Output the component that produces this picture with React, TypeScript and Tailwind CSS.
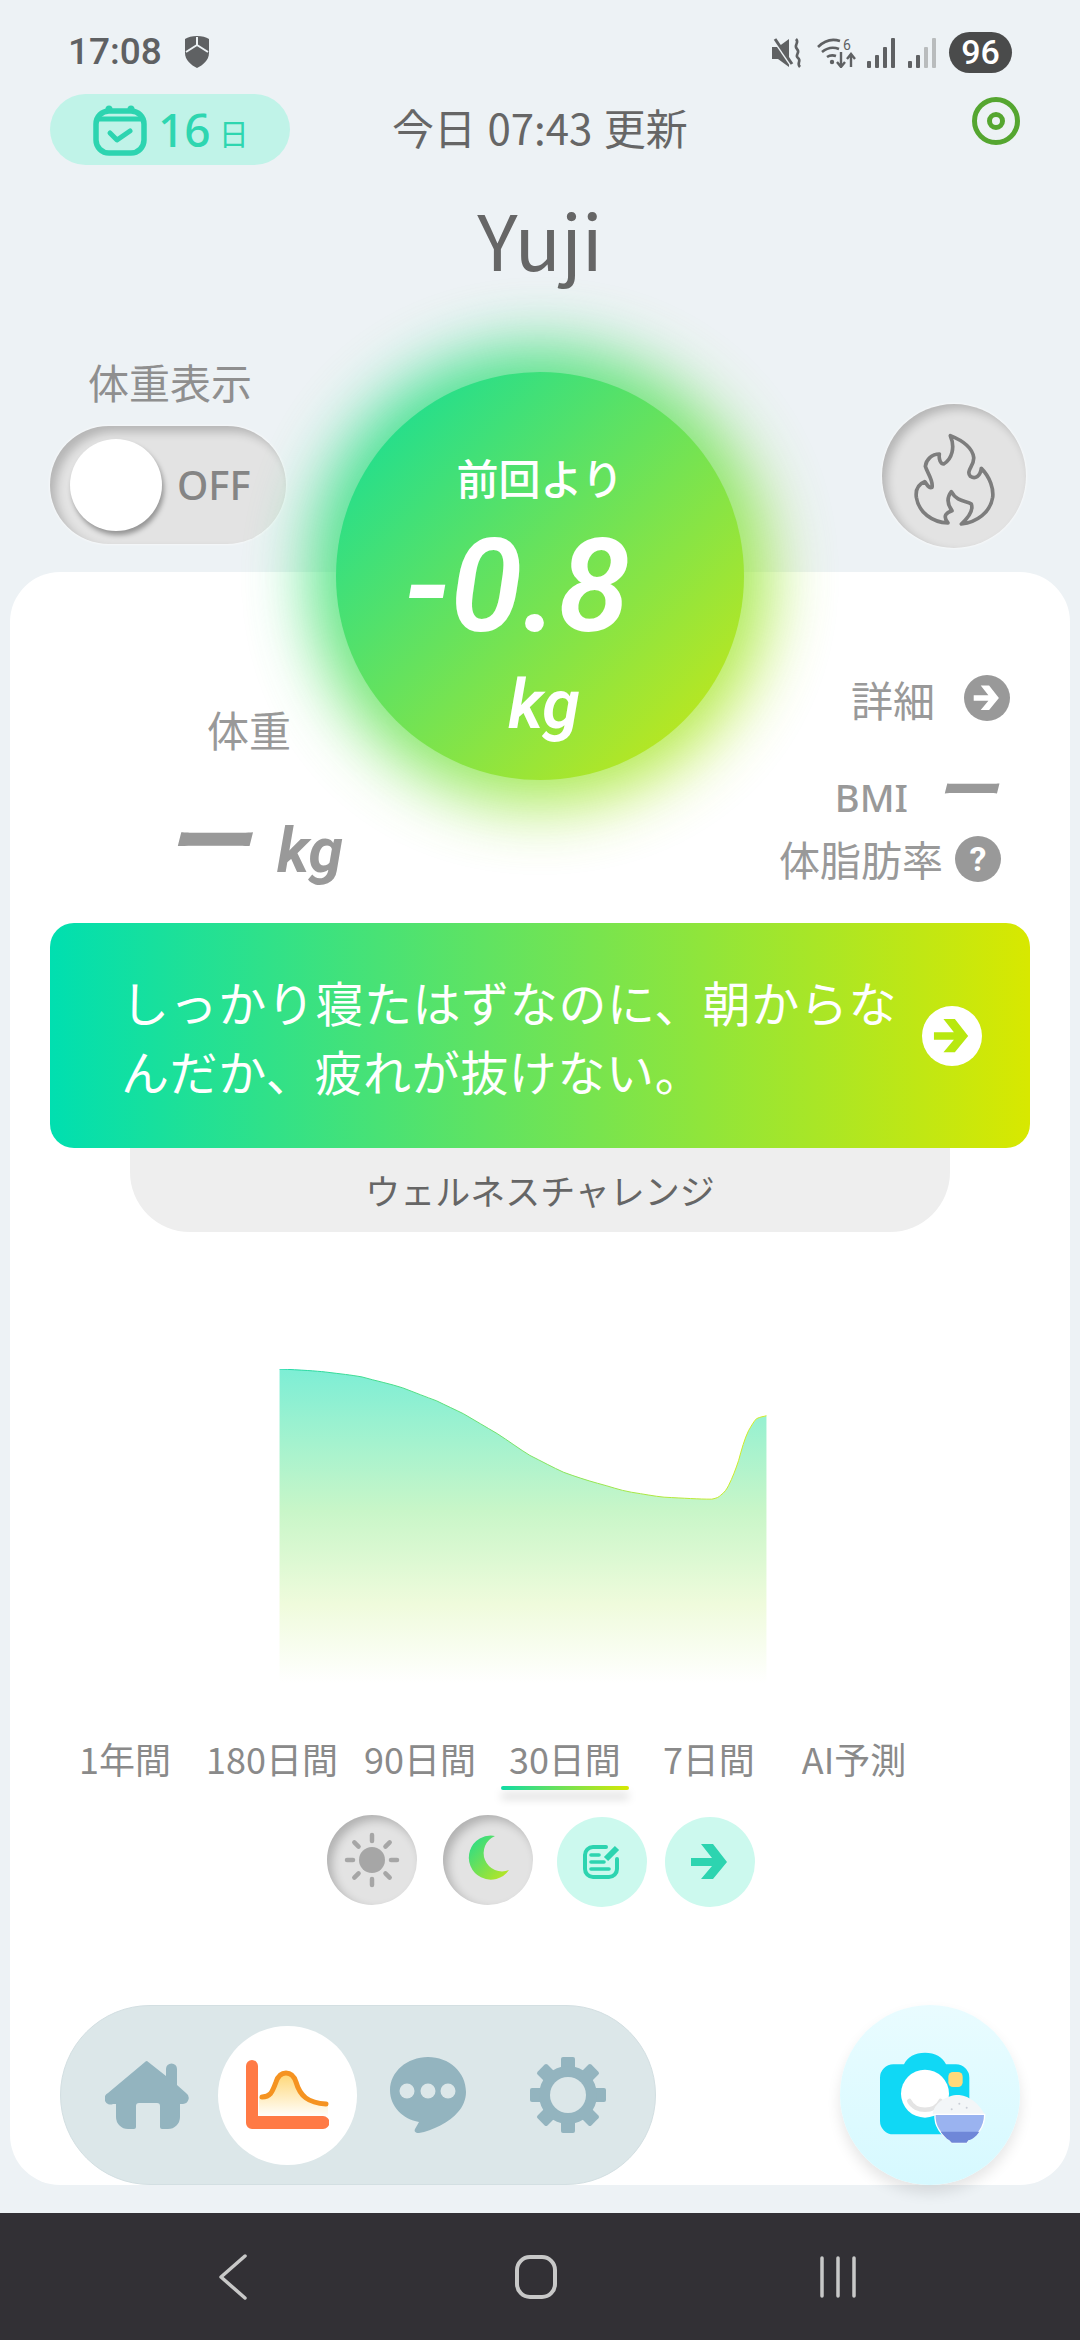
const MINT = '#2dd4b0';

const ranges = [
  { label: '1年間', cls: 'ml-[69px]' },
  { label: '180日間', cls: 'ml-[35px]' },
  { label: '90日間', cls: 'ml-[26px]' },
  { label: '30日間', cls: 'ml-[33px]', active: true },
  { label: '7日間', cls: 'ml-[42px]' },
  { label: 'AI予測', cls: 'ml-[47px]' },
];

function ArrowGlyph({ size, color }: { size: number; color: string }) {
  return (
    <svg width={size} height={size} viewBox="-20 -20 40 40">
      <path d="M-9 -18H3L17 0L3 17H-9L2 4H-19V-4H2Z" fill={color} />
    </svg>
  );
}

function StatusIcons() {
  return (
    <div className="flex items-center">
      <svg width="30" height="30" viewBox="0 0 30 30" className="ml-[772px]">
        <path d="M0 9h6l11-8v28l-11-8H0z" fill="#5f6163" />
        <path d="M2 2l17 25" stroke="#edf2f5" strokeWidth="3" />
        <path d="M3 1l17 25" stroke="#5f6163" strokeWidth="3" />
        <path d="M24 1c4 4-3 6 1 10s-3 6 1 9-2 5 2 9" stroke="#5f6163" strokeWidth="2.6" fill="none" />
      </svg>
      <svg width="40" height="30" viewBox="0 0 40 30" className="ml-[15px]">
        <path d="M1 9c8-8 16-8 22-6M5 14c6-5 12-5 17-3M10 19c3-2 6-2 9-1" stroke="#5f6163" strokeWidth="2.6" fill="none" />
        <circle cx="15" cy="24" r="2.2" fill="#5f6163" />
        <path d="M24 14v14M20 24l4 5 4-5M34 29V17M30 21l4-5 4 5" stroke="#5f6163" strokeWidth="2.4" fill="none" />
        <text x="26" y="12" fontSize="14" fill="#5f6163" fontFamily="Roboto, sans-serif">6</text>
      </svg>
      <svg width="29" height="30" viewBox="0 0 29 30" className="ml-[10px]">
        <rect x="0" y="23" width="4" height="7" rx="1" fill="#5f6163" />
        <rect x="8" y="17" width="4" height="13" rx="1" fill="#5f6163" />
        <rect x="16" y="9" width="4" height="21" rx="1" fill="#5f6163" />
        <rect x="24" y="0" width="4" height="30" rx="1" fill="#5f6163" />
      </svg>
      <svg width="29" height="30" viewBox="0 0 29 30" className="ml-[12px]">
        <rect x="0" y="23" width="4" height="7" rx="1" fill="#5f6163" />
        <rect x="8" y="17" width="4" height="13" rx="1" fill="#5f6163" />
        <rect x="16" y="9" width="4" height="21" rx="1" fill="#b9bcbd" />
        <rect x="24" y="0" width="4" height="30" rx="1" fill="#b9bcbd" />
      </svg>
      <div className="ml-[12px] w-[63px] h-[41px] rounded-full bg-[#4a4b4b] flex items-center justify-center text-white text-[34px] font-medium font-['Roboto',sans-serif]">
        96
      </div>
    </div>
  );
}

function CalendarIcon() {
  return (
    <svg width="54" height="52" viewBox="0 0 54 52" fill="none" stroke={MINT}>
      <rect x="3" y="7" width="48" height="42" rx="13" strokeWidth="5.5" />
      <path d="M4 15h46" strokeWidth="5" />
      <circle cx="16" cy="5" r="2.5" fill={MINT} strokeWidth="2" />
      <circle cx="38" cy="5" r="2.5" fill={MINT} strokeWidth="2" />
      <path d="M17 29l7 7 13-9" strokeWidth="5" strokeLinecap="round" strokeLinejoin="round" />
    </svg>
  );
}

function FlameIcon() {
  return (
    <svg width="144" height="144" viewBox="60 45 432 432" fill="none">
      <path
        d="M298 405C345 400 385 370 392 325C395 300 385 265 358 238C355 262 340 272 325 262C310 245 338 230 335 205C330 170 290 150 265 140C280 175 270 210 245 225C235 225 230 210 232 195C210 195 192 212 190 232C195 250 215 275 210 295C200 300 195 285 188 278C170 285 160 300 163 325C170 370 210 400 258 402C240 380 255 370 270 365C255 345 255 325 268 308C285 340 315 335 328 345C335 365 320 385 298 405Z"
        stroke="#7d7d7d"
        strokeWidth="11"
        strokeLinejoin="round"
      />
    </svg>
  );
}

function WeightCircle() {
  return (
    <div className="absolute left-[336px] top-[372px] w-[408px] h-[408px] z-10">
      <div className="absolute -inset-[26px] rounded-full bg-linear-to-br/srgb from-[#00dc9c] to-[#d4ea10] blur-[32px] opacity-85" />
      <div className="relative w-full h-full rounded-full bg-linear-to-br/srgb from-[#0cdd9e] to-[#d0e810] flex flex-col items-center text-white">
        <div className="mt-[79px] text-[42px] leading-[52px] font-medium">前回より</div>
        <div className="mt-[19px] -ml-[46px] text-[130px] leading-[130px] font-semibold italic font-['Roboto',sans-serif]">-0.8</div>
        <div className="mt-[17px] ml-[8px] text-[68px] leading-[72px] font-semibold italic font-['Roboto',sans-serif]">kg</div>
      </div>
    </div>
  );
}

function WeightChart() {
  return (
    <svg width="490" height="316" viewBox="278 1368 490 316" className="mt-[137px] ml-[268px] block">
      <defs>
        <linearGradient id="area" x1="0" y1="0" x2="0" y2="1">
          <stop offset="0" stopColor="#7deed5" />
          <stop offset="0.45" stopColor="#c8f6c8" />
          <stop offset="0.75" stopColor="#effbdc" />
          <stop offset="1" stopColor="#ffffff" />
        </linearGradient>
        <linearGradient id="line" x1="0" y1="0" x2="1" y2="0">
          <stop offset="0" stopColor="#1fd8a8" />
          <stop offset="1" stopColor="#d8ec20" />
        </linearGradient>
      </defs>
      <path
        d="M278 1368C300 1369 315 1370 324 1371C340 1373 350 1374 361 1376C375 1380 390 1383 402 1387C415 1392 425 1396 436 1400C446 1405 455 1409 463 1413C475 1420 485 1426 497 1433C508 1440 520 1449 530 1455C542 1461 553 1467 564 1472C575 1476 587 1480 598 1483C610 1486 620 1490 632 1492C645 1494 655 1496 665 1497C685 1498 700 1499 713 1499C718 1498 720 1497 722 1495C726 1492 728 1489 730 1485C734 1477 737 1469 740 1460C743 1449 746 1438 750 1430C753 1425 755 1421 758 1418C762 1416 765 1416 768 1415V1684H278Z"
        fill="url(#area)"
      />
      <path
        d="M278 1368C300 1369 315 1370 324 1371C340 1373 350 1374 361 1376C375 1380 390 1383 402 1387C415 1392 425 1396 436 1400C446 1405 455 1409 463 1413C475 1420 485 1426 497 1433C508 1440 520 1449 530 1455C542 1461 553 1467 564 1472C575 1476 587 1480 598 1483C610 1486 620 1490 632 1492C645 1494 655 1496 665 1497C685 1498 700 1499 713 1499C718 1498 720 1497 722 1495C726 1492 728 1489 730 1485C734 1477 737 1469 740 1460C743 1449 746 1438 750 1430C753 1425 755 1421 758 1418C762 1416 765 1416 768 1415"
        fill="none"
        stroke="url(#line)"
        strokeWidth="1"
      />
    </svg>
  );
}

function RoundButtons() {
  const rays = [0, 45, 90, 135, 180, 225, 270, 315];
  const inset = 'w-[90px] h-[90px] rounded-full bg-[#e3e3e3] shadow-[inset_5px_5px_10px_rgba(0,0,0,0.22)]';
  return (
    <div className="flex items-start mt-[28px] ml-[317px]">
      <div className={inset}>
        <svg width="90" height="90" viewBox="-45 -45 90 90">
          <circle r="13" fill="#a6a6a6" />
          {rays.map((r) => (
            <path key={r} d="M0 -19V-25" stroke="#a6a6a6" strokeWidth="4.5" strokeLinecap="round" transform={`rotate(${r})`} />
          ))}
        </svg>
      </div>
      <div className={`${inset} ml-[26px]`}>
        <svg width="90" height="90" viewBox="-45 -45 90 90">
          <defs>
            <linearGradient id="moon" x1="0" y1="0" x2="1" y2="1">
              <stop offset="0" stopColor="#20dc90" />
              <stop offset="1" stopColor="#c3e61a" />
            </linearGradient>
          </defs>
          <path d="M7 -24A22 22 0 1 0 21 10A18 18 0 0 1 7 -24Z" fill="url(#moon)" />
        </svg>
      </div>
      <div className="ml-[24px] mt-[2px] w-[90px] h-[90px] rounded-full bg-[#ccf9ee]">
        <svg width="90" height="90" viewBox="-45 -45 90 90" fill="none" stroke={MINT} strokeLinecap="round">
          <path d="M4 -15H-9A8 8 0 0 0 -17 -7V7A8 8 0 0 0 -9 15H7A8 8 0 0 0 15 7V-3" strokeWidth="4" />
          <path d="M-11 -7H-3M-11 0H2M-11 7H7" strokeWidth="3.6" />
          <path d="M4 -3L15 -14" strokeWidth="6" strokeLinecap="butt" />
        </svg>
      </div>
      <div className="ml-[18px] mt-[2px] w-[90px] h-[90px] rounded-full bg-[#ccf9ee] flex items-center justify-center">
        <ArrowGlyph size={40} color={MINT} />
      </div>
    </div>
  );
}

function BottomNav() {
  const teeth = [0, 45, 90, 135, 180, 225, 270, 315];
  return (
    <div className="flex justify-between mt-[98px] mx-[50px]">
      <div className="w-[596px] h-[180px] rounded-full bg-[#dce7e9] border border-[#d3dfe2] flex items-center pl-[44px]">
        <svg width="84" height="68" viewBox="0 0 84 68" fill="#93b4bf">
          <path d="M42 0L61 15V8A5 5 0 0 1 72 8V24L81 32A6 6 0 0 1 78 43H75V56A12 12 0 0 1 63 68H57A2 2 0 0 1 55 66V45A3 3 0 0 0 52 42H34A3 3 0 0 0 31 45V66A2 2 0 0 1 29 68H23A12 12 0 0 1 11 56V43H8A6 6 0 0 1 3 32L40 1A3 3 0 0 1 42 0Z" />
        </svg>
        <div className="ml-[29px] w-[139px] h-[139px] rounded-full bg-white flex items-center justify-center">
          <svg width="83" height="70" viewBox="0 0 83 70">
            <defs>
              <linearGradient id="hump" x1="0" y1="0" x2="0" y2="1">
                <stop offset="0" stopColor="#ffd673" />
                <stop offset="1" stopColor="#ffffff" />
              </linearGradient>
            </defs>
            <path d="M13 37C24 37 26 33 30 22C34 10 46 10 50 22C54 36 62 43 82 44V57H13Z" fill="url(#hump)" />
            <path d="M16 37C24 37 26 33 30 22C34 10 46 10 50 22C54 36 62 43 80 44" fill="none" stroke="#f59321" strokeWidth="5" strokeLinecap="round" />
            <path d="M6 0A6 6 0 0 1 12 6V56H77A6.5 6.5 0 0 1 77 69H6A6 6 0 0 1 0 63V6A6 6 0 0 1 6 0Z" fill="#ff7a45" />
          </svg>
        </div>
        <svg width="76" height="76" viewBox="0 0 76 76" className="ml-[33px]">
          <path d="M38 0C59 0 76 15 76 35C76 42 73 50 68 55C60 65 42 74 29 76C25 76 24 74 25 72L29 65C13 62 0 50 0 33C0 15 17 0 38 0Z" fill="#93b4bf" />
          <circle cx="17" cy="34" r="7.5" fill="#dce7e9" />
          <circle cx="38" cy="34" r="7.5" fill="#dce7e9" />
          <circle cx="58" cy="34" r="7.5" fill="#dce7e9" />
        </svg>
        <svg width="78" height="76" viewBox="-39 -38 78 76" className="ml-[63px]">
          {teeth.map((t) => (
            <rect key={t} x="-7" y="-38" width="14" height="18" rx="2" fill="#93b4bf" transform={`rotate(${t})`} />
          ))}
          <circle r="29" fill="#93b4bf" />
          <circle r="18" fill="#dce7e9" />
        </svg>
      </div>
      <div className="w-[180px] h-[180px] rounded-full bg-linear-to-b/srgb from-[#e9fcff] to-[#d6f9ff] shadow-[0_8px_14px_rgba(0,0,0,0.1)]">
        <svg width="180" height="180" viewBox="60 72 540 540">
          <path d="M180 290A40 40 0 0 1 220 250H252C262 228 285 215 315 215C345 215 368 228 378 250H408A40 40 0 0 1 448 290V420A40 40 0 0 1 408 460H220A40 40 0 0 1 180 420Z" fill="#10d8f5" />
          <circle cx="315" cy="338" r="72" fill="#ffffff" />
          <path d="M268 360C285 395 345 395 362 360" fill="none" stroke="#e4e4e4" strokeWidth="14" strokeLinecap="round" />
          <rect x="385" y="273" width="43" height="45" rx="14" fill="#ffd97a" />
          <path d="M338 400C340 365 385 340 418 342C450 345 478 370 494 400Z" fill="#f3f6f8" />
          <path d="M345 400H494C494 440 470 468 445 475L440 485H395L388 475C365 465 342 435 345 400Z" fill="#9ab3f0" stroke="#ffffff" strokeWidth="4" />
          <path d="M362 452H478C468 468 455 475 445 478L440 485H395L388 478C378 472 370 462 362 452Z" fill="#6f87d8" />
          <circle cx="395" cy="385" r="3" fill="#c9ced6" />
          <circle cx="418" cy="368" r="3" fill="#c9ced6" />
          <circle cx="440" cy="380" r="3" fill="#c9ced6" />
        </svg>
      </div>
    </div>
  );
}

export default function App() {
  return (
    <div className="relative w-[1080px] h-[2340px] overflow-hidden bg-[#edf2f5] flex flex-col font-['Noto_Sans_CJK_JP',sans-serif]">
      {/* status bar */}
      <div className="relative h-[94px] shrink-0">
        <div className="absolute left-[68px] top-[28px] flex items-center text-[#5f6163] text-[37px] leading-[48px] font-medium font-['Roboto',sans-serif]">
          17:08
          <svg width="26" height="32" viewBox="0 0 26 32" className="ml-[22px]">
            <path d="M13 0C18 0 22 1 25 3V17C25 24 19 29 13 32C7 29 1 24 1 17V3C4 1 8 0 13 0Z" fill="#5f6163" />
            <path d="M13 1V9M13 9L2 16M13 9L24 16" stroke="#edf2f5" strokeWidth="2" fill="none" />
          </svg>
        </div>
        <div className="absolute left-0 top-[32px]">
          <StatusIcons />
        </div>
      </div>

      {/* header */}
      <div className="flex items-start h-[71px] shrink-0 pl-[50px]">
        <div className="w-[240px] h-[71px] rounded-full bg-[#c0f3e8] flex items-center pl-[43px] text-[#2ed6b0]">
          <CalendarIcon />
          <span className="ml-[11px] text-[46px] font-medium font-['Noto_Sans',sans-serif]">16</span>
          <span className="ml-[8px] mt-[6px] text-[30px]">日</span>
        </div>
        <div className="ml-[102px] h-[71px] -mt-[3px] flex items-center text-[42px] text-[#666666] [word-spacing:2px]">今日 07:43 更新</div>
        <svg width="48" height="48" viewBox="0 0 48 48" className="ml-[284px] mt-[3px]" fill="none" stroke="#55a630">
          <circle cx="24" cy="24" r="21.5" strokeWidth="5" />
          <circle cx="24" cy="24" r="6.5" strokeWidth="5" />
        </svg>
      </div>

      <div className="mt-[23px] h-[100px] leading-[100px] text-center text-[76px] text-[#666666] shrink-0">Yuji</div>

      {/* toggle + flame */}
      <div className="mt-[76px] h-[184px] pl-[50px] pr-[54px] flex justify-between shrink-0">
        <div className="flex flex-col">
          <div className="-mt-[7px] h-[48px] leading-[48px] text-[41px] text-[#8f8f8f] ml-[38px]">体重表示</div>
          <div className="mt-[21px] w-[236px] h-[118px] rounded-full bg-[#e3e3e3] shadow-[inset_6px_6px_10px_rgba(0,0,0,0.2),0_0_3px_#ffffff] flex items-center pl-[20px]">
            <div className="w-[92px] h-[92px] rounded-full bg-white shadow-[2px_4px_5px_rgba(0,0,0,0.35)]" />
            <span className="ml-[15px] text-[40px] font-medium text-[#858585] font-['Noto_Sans',sans-serif]">OFF</span>
          </div>
        </div>
        <div className="self-end w-[144px] h-[144px] rounded-full bg-[#e3e3e3] shadow-[inset_5px_5px_10px_rgba(0,0,0,0.2),0_0_3px_#ffffff]">
          <FlameIcon />
        </div>
      </div>

      {/* card */}
      <div className="mt-[24px] mx-[10px] h-[1613px] rounded-[50px] bg-white shrink-0 flex flex-col">
        <div className="h-[351px] pt-[100px] flex justify-between shrink-0">
          <div className="ml-[197px] pt-[31px]">
            <div className="text-[42px] leading-[52px] text-[#999999]">体重</div>
            <div className="-ml-[44px] mt-[42px] flex items-start h-[76px] text-[#999999] italic font-bold">
              <span className="text-[88px] leading-[76px]">ー</span>
              <span className="ml-[26px] mt-[16px] text-[62px] leading-[76px] font-['Roboto',sans-serif]">kg</span>
            </div>
          </div>
          <div className="mr-[60px] flex flex-col items-end text-[#999999]">
            <div className="flex items-center h-[52px]">
              <span className="text-[42px]">詳細</span>
              <span className="ml-[29px] w-[46px] h-[46px] rounded-full bg-[#999999] flex items-center justify-center">
                <ArrowGlyph size={28} color="#ffffff" />
              </span>
            </div>
            <div className="flex items-start h-[60px] mt-[43px]">
              <span className="text-[38px] leading-[60px] font-medium font-['Noto_Sans',sans-serif]">BMI</span>
              <span className="ml-[26px] mr-[12px] -mt-[12px] text-[64px] leading-[60px] font-bold italic">ー</span>
            </div>
            <div className="flex items-center h-[52px] mt-[6px] mr-[9px]">
              <span className="text-[41px]">体脂肪率</span>
              <span className="ml-[12px] w-[46px] h-[46px] rounded-full bg-[#999999] flex items-center justify-center text-white text-[34px] font-bold font-['Roboto',sans-serif]">?</span>
            </div>
          </div>
        </div>

        {/* challenge banner */}
        <div className="mx-[40px] h-[225px] rounded-[24px] bg-linear-to-r/srgb from-[#00dfb0] to-[#d8e800] flex items-center pl-[71px] shrink-0">
          <div className="w-[780px] text-[48px] tracking-[0.6px] leading-[69px] text-white">しっかり寝たはずなのに、朝からなんだか、疲れが抜けない。</div>
          <div className="ml-[21px] w-[60px] h-[60px] rounded-full bg-white flex items-center justify-center">
            <ArrowGlyph size={38} color="#b8e80f" />
          </div>
        </div>
        <div className="mx-[120px] h-[84px] rounded-b-[60px] bg-[#eeeeee] flex items-center justify-center text-[35px] text-[#666666] shrink-0">
          ウェルネスチャレンジ
        </div>

        <WeightChart />

        {/* range tabs */}
        <div className="flex items-start mt-[52px] h-[52px] text-[36px] leading-[46px] text-[#8a8a8a]">
          {ranges.map((r) => (
            <div key={r.label} className={`${r.cls} flex flex-col`}>
              <span>{r.label}</span>
              {r.active && (
                <span className="-mx-[8px] mt-[5px] h-[4px] rounded-full bg-linear-to-r/srgb from-[#10dba5] to-[#d8e800] shadow-[0_8px_10px_rgba(0,0,0,0.22)]" />
              )}
            </div>
          ))}
        </div>

        <RoundButtons />
        <BottomNav />
      </div>

      <WeightCircle />

      {/* android nav bar */}
      <div className="mt-auto h-[127px] bg-[#323035] flex items-center shrink-0">
        <svg width="30" height="46" viewBox="0 0 30 46" className="ml-[218px]" fill="none" stroke="#c8c8c8" strokeWidth="3.5" strokeLinecap="round" strokeLinejoin="round">
          <path d="M27 2L3 23L27 44" />
        </svg>
        <svg width="42" height="44" viewBox="0 0 42 44" className="ml-[267px]" fill="none" stroke="#c8c8c8" strokeWidth="4">
          <rect x="2" y="2" width="38" height="40" rx="13" />
        </svg>
        <svg width="36" height="42" viewBox="0 0 36 42" className="ml-[263px]" fill="none" stroke="#c8c8c8" strokeWidth="3.5" strokeLinecap="round">
          <path d="M2 2V40M18 2V40M34 2V40" />
        </svg>
      </div>
    </div>
  );
}
